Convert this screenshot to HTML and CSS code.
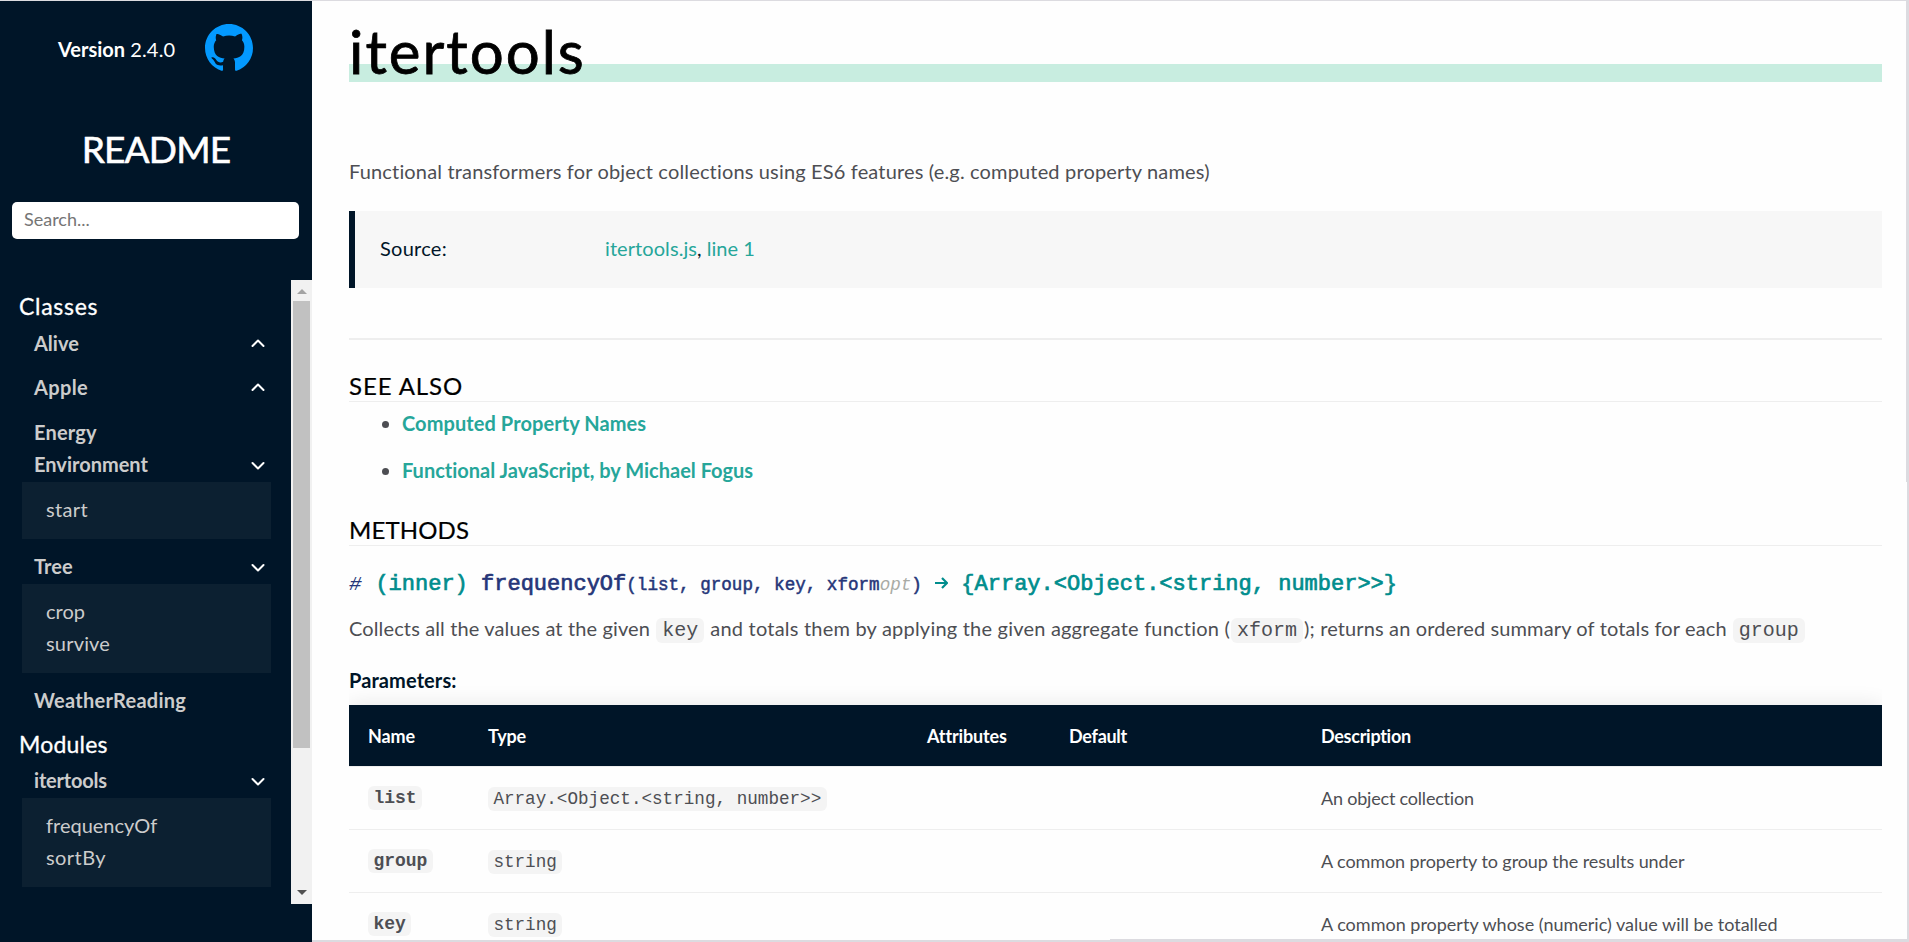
FILE: index.html
```html
<!DOCTYPE html>
<html lang="en">
<head>
<meta charset="utf-8">
<title>itertools</title>
<link rel="stylesheet" href="styles.css">
</head>
<body>
<aside class="sidebar">
  <div class="brand">
    <span class="version"><b>Version</b> <span class="ls2">2.4.0</span></span>
    <svg class="github" viewBox="0 0 16 16"><path d="M8 0C3.58 0 0 3.58 0 8c0 3.54 2.29 6.53 5.47 7.59.4.07.55-.17.55-.38 0-.19-.01-.82-.01-1.49-2.01.37-2.53-.49-2.69-.94-.09-.23-.48-.94-.82-1.13-.28-.15-.68-.52-.01-.53.63-.01 1.08.58 1.23.82.72 1.21 1.87.87 2.33.66.07-.52.28-.87.51-1.07-1.78-.2-3.64-.89-3.64-3.95 0-.87.31-1.59.82-2.15-.08-.2-.36-1.02.08-2.12 0 0 .67-.21 2.2.82.64-.18 1.32-.27 2-.27s1.36.09 2 .27c1.53-1.04 2.2-.82 2.2-.82.44 1.1.16 1.92.08 2.12.51.56.82 1.27.82 2.15 0 3.07-1.87 3.75-3.65 3.95.29.25.54.73.54 1.48v2.2c0 .21.15.46.55.38A8.01 8.01 0 0 0 16 8c0-4.42-3.58-8-8-8z"/></svg>
  </div>
  <div class="readme">README</div>
  <div class="search">Search...</div>
  <div class="navwrap">
    <nav class="nav">
      <h3 class="group classes">Classes</h3>
      <div class="item closed"><span>Alive</span><svg class="chev" viewBox="0 0 14 10"><path d="M1.500 8 7 2.500 12.500 8"/></svg></div>
      <div class="item closed apple"><span class="ls3">Apple</span><svg class="chev" viewBox="0 0 14 10"><path d="M1.500 8 7 2.500 12.500 8"/></svg></div>
      <div class="item"><span class="ls2">Energy</span></div>
      <div class="item open"><span>Environment</span><svg class="chev" viewBox="0 0 14 10"><path d="M1.500 2 7 7.500 12.500 2"/></svg></div>
      <div class="sub"><div class="ls3">start</div></div>
      <div class="item open"><span class="ls1">Tree</span><svg class="chev" viewBox="0 0 14 10"><path d="M1.500 2 7 7.500 12.500 2"/></svg></div>
      <div class="sub"><div>crop</div><div class="ls2">survive</div></div>
      <div class="item closed"><span class="ls25">WeatherReading</span></div>
      <h3 class="group">Modules</h3>
      <div class="item open"><span class="lsn2">itertools</span><svg class="chev" viewBox="0 0 14 10"><path d="M1.500 2 7 7.500 12.500 2"/></svg></div>
      <div class="sub"><div>frequencyOf</div><div class="ls4">sortBy</div></div>
    </nav>
    <div class="scroll"><i class="up"></i><i class="thumb"></i><i class="down"></i></div>
  </div>
</aside>
<main class="main">
  <h1 class="title">itertools</h1>
  <p class="lead">Functional transformers for object collections using ES6 features (e.g. computed property names)</p>
  <div class="source"><span class="label ls25">Source:</span><span><a class="ls1">itertools.js</a>, <a>line 1</a></span></div>
  <h3 class="sect see">SEE ALSO</h3>
  <ul class="links"><li><a class="ls1">Computed Property Names</a></li><li><a>Functional JavaScript, by Michael Fogus</a></li></ul>
  <h3 class="sect">METHODS</h3>
  <h4 class="sig"><span class="hash">#</span> <span class="teal">(inner)</span> frequencyOf<span class="args">(list, group, key, xform<i>opt</i>)</span> <span class="teal"><svg class="arrow" viewBox="0 0 13 14"><path d="M0 7h12M7 2l5 5-5 5"/></svg> {Array.&lt;Object.&lt;string, number&gt;&gt;}</span></h4>
  <p class="desc"><span class="d1">Collects all the values at the given</span> <code>key</code> <span class="d2">and totals them by applying the given aggregate function (</span><code>xform</code><span class="d1">); returns an ordered summary of totals for each</span> <code>group</code></p>
  <h5 class="ptitle">Parameters:</h5>
  <div class="tablebox">
    <div class="row head"><span>Name</span><span>Type</span><span>Attributes</span><span class="lsn3">Default</span><span class="lsn3">Description</span></div>
    <div class="row"><span><code class="n">list</code></span><span><code class="t">Array.&lt;Object.&lt;string, number&gt;&gt;</code></span><span></span><span></span><span class="lsn2">An object collection</span></div>
    <div class="row"><span><code class="n">group</code></span><span><code class="t">string</code></span><span></span><span></span><span class="lsn07">A common property to group the results under</span></div>
    <div class="row"><span><code class="n">key</code></span><span><code class="t">string</code></span><span></span><span></span><span>A common property whose (numeric) value will be totalled</span></div>
  </div>
</main>
<i class="edge edge-right"></i>
<i class="edge edge-bottom"></i>
</body>
</html>
```
FILE: styles.css
```css
* { box-sizing: border-box; }
body {
  margin: 0;
  width: 1909px;
  height: 942px;
  overflow: hidden;
  display: flex;
  position: relative;
  background: #fefefe;
  font: 20px/32px Lato, "Open Sans", sans-serif;
  font-variant-ligatures: none;
  color: #4d4e53;
  border-top: 1px solid #dcdbe0;
}
h1, h3, h4, h5, p, ul { margin: 0; padding: 0; font-weight: 400; }
.ls1 { letter-spacing: .08px; }
.ls2 { letter-spacing: .18px; }
.ls25 { letter-spacing: .26px; }
.ls3 { letter-spacing: .35px; }
.ls4 { letter-spacing: .42px; }
.lsn07 { letter-spacing: -.08px; }
.lsn2 { letter-spacing: -.2px; }
.lsn3 { letter-spacing: -.28px; }
.d1 { letter-spacing: .13px; }
.d2 { letter-spacing: .21px; }
.sidebar { width: 312px; height: 941px; flex: none; background: #001528; color: #fff; display: flex; flex-direction: column; }
.brand { height: 94px; padding: 0 59px 0 58px; display: flex; align-items: center; justify-content: space-between; }
.version { white-space: nowrap; line-height: 96px; padding-top: 1px; }
.github { width: 48px; height: 48px; fill: #0399ff; }
.readme { height: 107px; line-height: 107px; font-size: 37px; letter-spacing: -.8px; text-align: center; -webkit-text-stroke: .6px #fff; }
.search { margin: 0 13px 0 12px; height: 37px; padding-left: 12px; border-radius: 5px; background: #fff; color: #757575; font-size: 18px; line-height: 34px; }
.navwrap { margin-top: 41px; height: 624px; display: flex; justify-content: space-between; }
.nav { width: 271px; padding-top: 10px; }
.group { padding-left: 19px; height: 36px; line-height: 32px; font-size: 23px; letter-spacing: .2px; -webkit-text-stroke: .3px #fff; }
.group.classes { height: 37px; letter-spacing: .7px; }
.item { display: flex; justify-content: space-between; align-items: center; padding: 0 6px 0 34px; height: 32px; line-height: 34px; color: #ccc; font-weight: 700; }
.item.closed { margin-bottom: 12px; }
.item.apple { margin-bottom: 13px; }
.item.open .chev { margin-top: 3px; }
.chev { width: 14px; height: 10px; fill: none; stroke: #fff; stroke-width: 2; stroke-linecap: round; stroke-linejoin: round; }
.sub { margin: 2px 0 11px 22px; padding: 11px 24px 14px; background: #0c2031; color: #ccc; }
.scroll { width: 21px; background: #f1f1f1; display: flex; flex-direction: column; align-items: center; }
.up, .down { width: 0; height: 0; border: 5px solid transparent; }
.up { border-bottom-color: #a3a3a3; border-top: 0; margin: 9px 0 7px; }
.thumb { width: 17px; height: 447px; background: #c1c1c1; }
.down { border-top-color: #505050; border-bottom: 0; margin-top: auto; margin-bottom: 9px; }
.main { flex: 1; padding: 0 25px 0 37px; border-right: 2px solid #dcdbe0; border-bottom: 2px solid #dcdbe0; height: 941px; overflow: hidden; }
.edge { position: absolute; background: #dcdbe0; }
.edge-right { right: 2px; top: 0; width: 1px; height: 481px; }
.edge-bottom { left: 1110px; right: 0; bottom: 2px; height: 1px; }
.title { margin-top: 13px; height: 68px; line-height: 74px; font-size: 60px; letter-spacing: 2px; color: #000; -webkit-text-stroke: .8px #000; background: linear-gradient(#c8ede0, #c8ede0) 0 100% / 100% 18px no-repeat; }
.lead { margin-top: 73px; height: 32px; letter-spacing: .16px; }
.source { margin-top: 24px; height: 77px; line-height: 75px; background: #f7f7f7; border-left: 6px solid #001528; padding-left: 25px; display: flex; color: #001528; }
.label { width: 225px; }
a { color: #26a69a; }
.sect { height: 46px; line-height: 59px; font-size: 24px; color: #000; letter-spacing: .13px; border-bottom: 1px solid #eee; -webkit-text-stroke: .2px #000; }
.see { margin-top: 50px; border-top: 2px solid #eee; height: 64px; line-height: 91px; letter-spacing: .9px; }
.links { padding-left: 53px; padding-top: 5px; font-weight: 700; }
.links li { height: 46px; }
.links li:first-child { height: 47px; }
.sig { margin-top: 23px; height: 32px; font: 400 22px/32px "Liberation Mono", monospace; -webkit-text-stroke: .7px currentColor; color: #263679; white-space: pre; }
.hash { font-style: italic; font-size: 21px; letter-spacing: .6px; -webkit-text-stroke: 0; }
.args { font-size: 17.6px; -webkit-text-stroke: .5px currentColor; }
.args i { color: #a9aba5; -webkit-text-stroke: 0; }
.teal { color: #008d8d; }
.arrow { width: 13px; height: 14px; fill: none; stroke: #008d8d; stroke-width: 2.2; }
.desc { margin-top: 11px; white-space: pre; }
code { font: 20px/24px "Liberation Mono", monospace; background: #f4f4f4; border-radius: 6px; padding: 1px 6px; margin: 0 1px; }
.ptitle { color: #001528; font-size: 20px; font-weight: 700; letter-spacing: .1px; margin-top: 20px; height: 41px; }
.tablebox { box-shadow: 0 0 20px rgba(0,0,0,.1); clip-path: inset(-30px 0 0 0); font-size: 18px; }
.row { display: grid; grid-template-columns: 120px 439px 142px 252px 1fr; padding-left: 19px; height: 63px; line-height: 63px; border-bottom: 1px solid #eee; background: #fefefe; }
.head { background: #001528; color: #fff; height: 62px; font-weight: 700; letter-spacing: -.13px; }
.row code { margin: 0; padding: 2px 5.4px; letter-spacing: 0; position: relative; top: -2px; }
.row .n { font-weight: 700; font-size: 18px; }
.row .t { font-size: 17.64px; top: -1px; }
```
